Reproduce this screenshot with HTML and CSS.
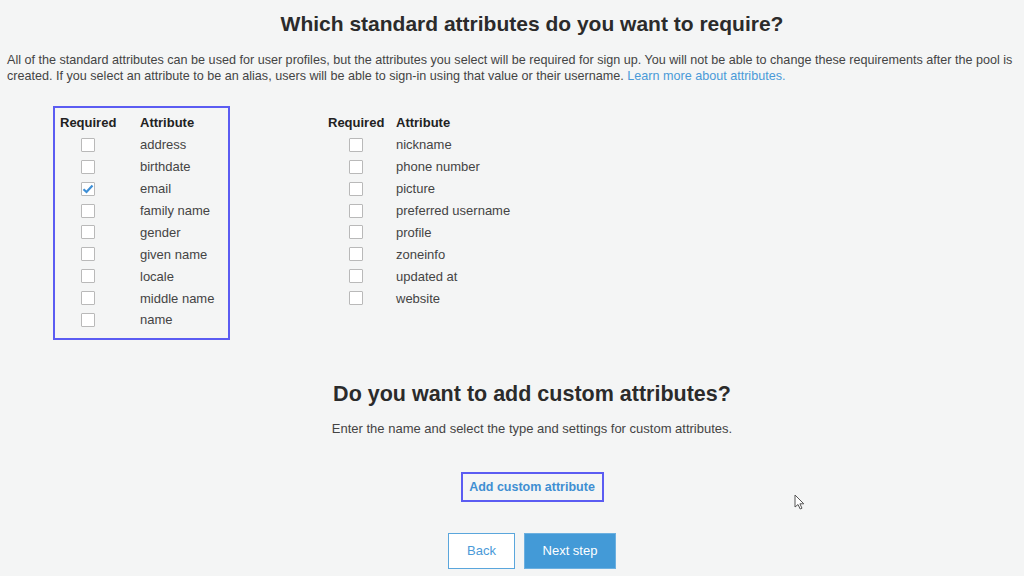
FILE: index.html
```html
<!DOCTYPE html>
<html lang="en">
<head>
    <meta charset="UTF-8">
    <meta name="viewport" content="width=device-width, initial-scale=1.0">
    <title>Attributes</title>
    <link rel="stylesheet" href="styles.css">
</head>
<body>
    <div class="page">
        <h2 class="title">Which standard attributes do you want to require?</h2>
        <p class="intro">All of the standard attributes can be used for user profiles, but the attributes you select will be required for sign up. You will not be able to change these requirements after the pool is created. If you select an attribute to be an alias, users will be able to sign-in using that value or their username. <a href="#" class="link">Learn more about attributes.</a></p>

        <div class="tables">
            <div class="attr-table focused">
                <div class="row head"><span class="req">Required</span><span class="name">Attribute</span></div>
                <div class="row"><span class="req"><span class="box"></span></span><span class="name">address</span></div>
                <div class="row"><span class="req"><span class="box"></span></span><span class="name">birthdate</span></div>
                <div class="row"><span class="req"><span class="box checked"><svg width="12" height="10" viewBox="0 0 12 10"><path d="M1.5 5.2 L4.5 8 L10.5 1.5" fill="none" stroke="#3d8fd6" stroke-width="2.2"/></svg></span></span><span class="name">email</span></div>
                <div class="row"><span class="req"><span class="box"></span></span><span class="name">family name</span></div>
                <div class="row"><span class="req"><span class="box"></span></span><span class="name">gender</span></div>
                <div class="row"><span class="req"><span class="box"></span></span><span class="name">given name</span></div>
                <div class="row"><span class="req"><span class="box"></span></span><span class="name">locale</span></div>
                <div class="row"><span class="req"><span class="box"></span></span><span class="name">middle name</span></div>
                <div class="row"><span class="req"><span class="box"></span></span><span class="name">name</span></div>
            </div>
            <div class="attr-table narrow">
                <div class="row head"><span class="req">Required</span><span class="name">Attribute</span></div>
                <div class="row"><span class="req"><span class="box"></span></span><span class="name">nickname</span></div>
                <div class="row"><span class="req"><span class="box"></span></span><span class="name">phone number</span></div>
                <div class="row"><span class="req"><span class="box"></span></span><span class="name">picture</span></div>
                <div class="row"><span class="req"><span class="box"></span></span><span class="name">preferred username</span></div>
                <div class="row"><span class="req"><span class="box"></span></span><span class="name">profile</span></div>
                <div class="row"><span class="req"><span class="box"></span></span><span class="name">zoneinfo</span></div>
                <div class="row"><span class="req"><span class="box"></span></span><span class="name">updated at</span></div>
                <div class="row"><span class="req"><span class="box"></span></span><span class="name">website</span></div>
            </div>
        </div>

        <h2 class="subtitle">Do you want to add custom attributes?</h2>
        <p class="note">Enter the name and select the type and settings for custom attributes.</p>

        <div class="custom">
            <button class="btn-custom">Add custom attribute</button>
        </div>

        <div class="actions">
            <button class="btn-back">Back</button>
            <button class="btn-next">Next step</button>
        </div>
    </div>

    <!-- mouse pointer seen in the screenshot -->
    <svg class="pointer" width="12" height="18" viewBox="0 0 12 18">
        <path d="M1 1 L1 13 L4 10.5 L6.2 15 L8 14.2 L5.9 9.8 L9.8 9.8 Z" fill="#fff" stroke="#555" stroke-width="1"/>
    </svg>
</body>
</html>
```

FILE: styles.css
```css
* {
    margin: 0;
    padding: 0;
    box-sizing: border-box;
}

body {
    font-family: "Liberation Sans", Arial, sans-serif;
    background-color: #f4f5f5;
    color: #444;
    width: 1024px;
    height: 576px;
    overflow: hidden;
}

/* the page is a little wider than the window, so centred items sit right of middle */
.page {
    width: 1064px;
    padding: 0 7px;
}

.title {
    font-size: 21px;
    color: #2b2b2b;
    text-align: center;
    padding-top: 12px;
    line-height: 24px;
}

.intro {
    font-size: 12.6px;
    line-height: 16px;
    margin-top: 16px;
    color: #444;
}

.link {
    color: #4a9ad8;
    text-decoration: none;
}

.tables {
    display: flex;
    gap: 91px;
    margin-top: 22px;
    padding-left: 46px;
}

.attr-table {
    border: 2px solid transparent;
    padding: 4px 5px 7px 5px;
    width: 177px;
}

.attr-table.focused {
    border-color: #5b5cf2;
}

.attr-table.narrow {
    width: 220px;
}

.row {
    display: flex;
    align-items: center;
    height: 21.9px;
    font-size: 13px;
}

.row.head {
    font-weight: bold;
    color: #222;
}

.req {
    flex-shrink: 0;
    width: 80px;
    display: flex;
    justify-content: center;
    padding-right: 25px;
}

.row.head .req {
    justify-content: flex-start;
    padding-right: 0;
}

.narrow .req {
    width: 68px;
    padding-right: 13px;
}

.name {
    white-space: nowrap;
}

.box {
    width: 14px;
    height: 14px;
    border: 1px solid #b9b9b9;
    background-color: #fff;
    border-radius: 1px;
    display: flex;
    align-items: center;
    justify-content: center;
}

.subtitle {
    font-size: 21.5px;
    color: #2b2b2b;
    text-align: center;
    margin-top: 42px;
    line-height: 24px;
}

.note {
    font-size: 13px;
    text-align: center;
    margin-top: 15px;
    line-height: 16px;
}

.custom {
    display: flex;
    justify-content: center;
    margin-top: 35px;
}

.btn-custom {
    font-family: "Liberation Sans", Arial, sans-serif;
    font-size: 12.5px;
    font-weight: bold;
    color: #3f8fd2;
    background-color: transparent;
    border: 2px solid #5b5cf2;
    width: 143px;
    height: 30px;
}

.actions {
    display: flex;
    justify-content: center;
    gap: 9px;
    margin-top: 31px;
}

.btn-back,
.btn-next {
    font-family: "Liberation Sans", Arial, sans-serif;
    font-size: 13px;
    height: 36px;
    cursor: pointer;
}

.btn-back {
    width: 67px;
    background-color: #fff;
    color: #4a9ad8;
    border: 1px solid #5aa6dc;
}

.btn-next {
    width: 92px;
    background-color: #439ad7;
    color: #fff;
    border: 1px solid #6cb0e0;
}

.pointer {
    position: absolute;
    left: 794px;
    top: 494px;
}
```
